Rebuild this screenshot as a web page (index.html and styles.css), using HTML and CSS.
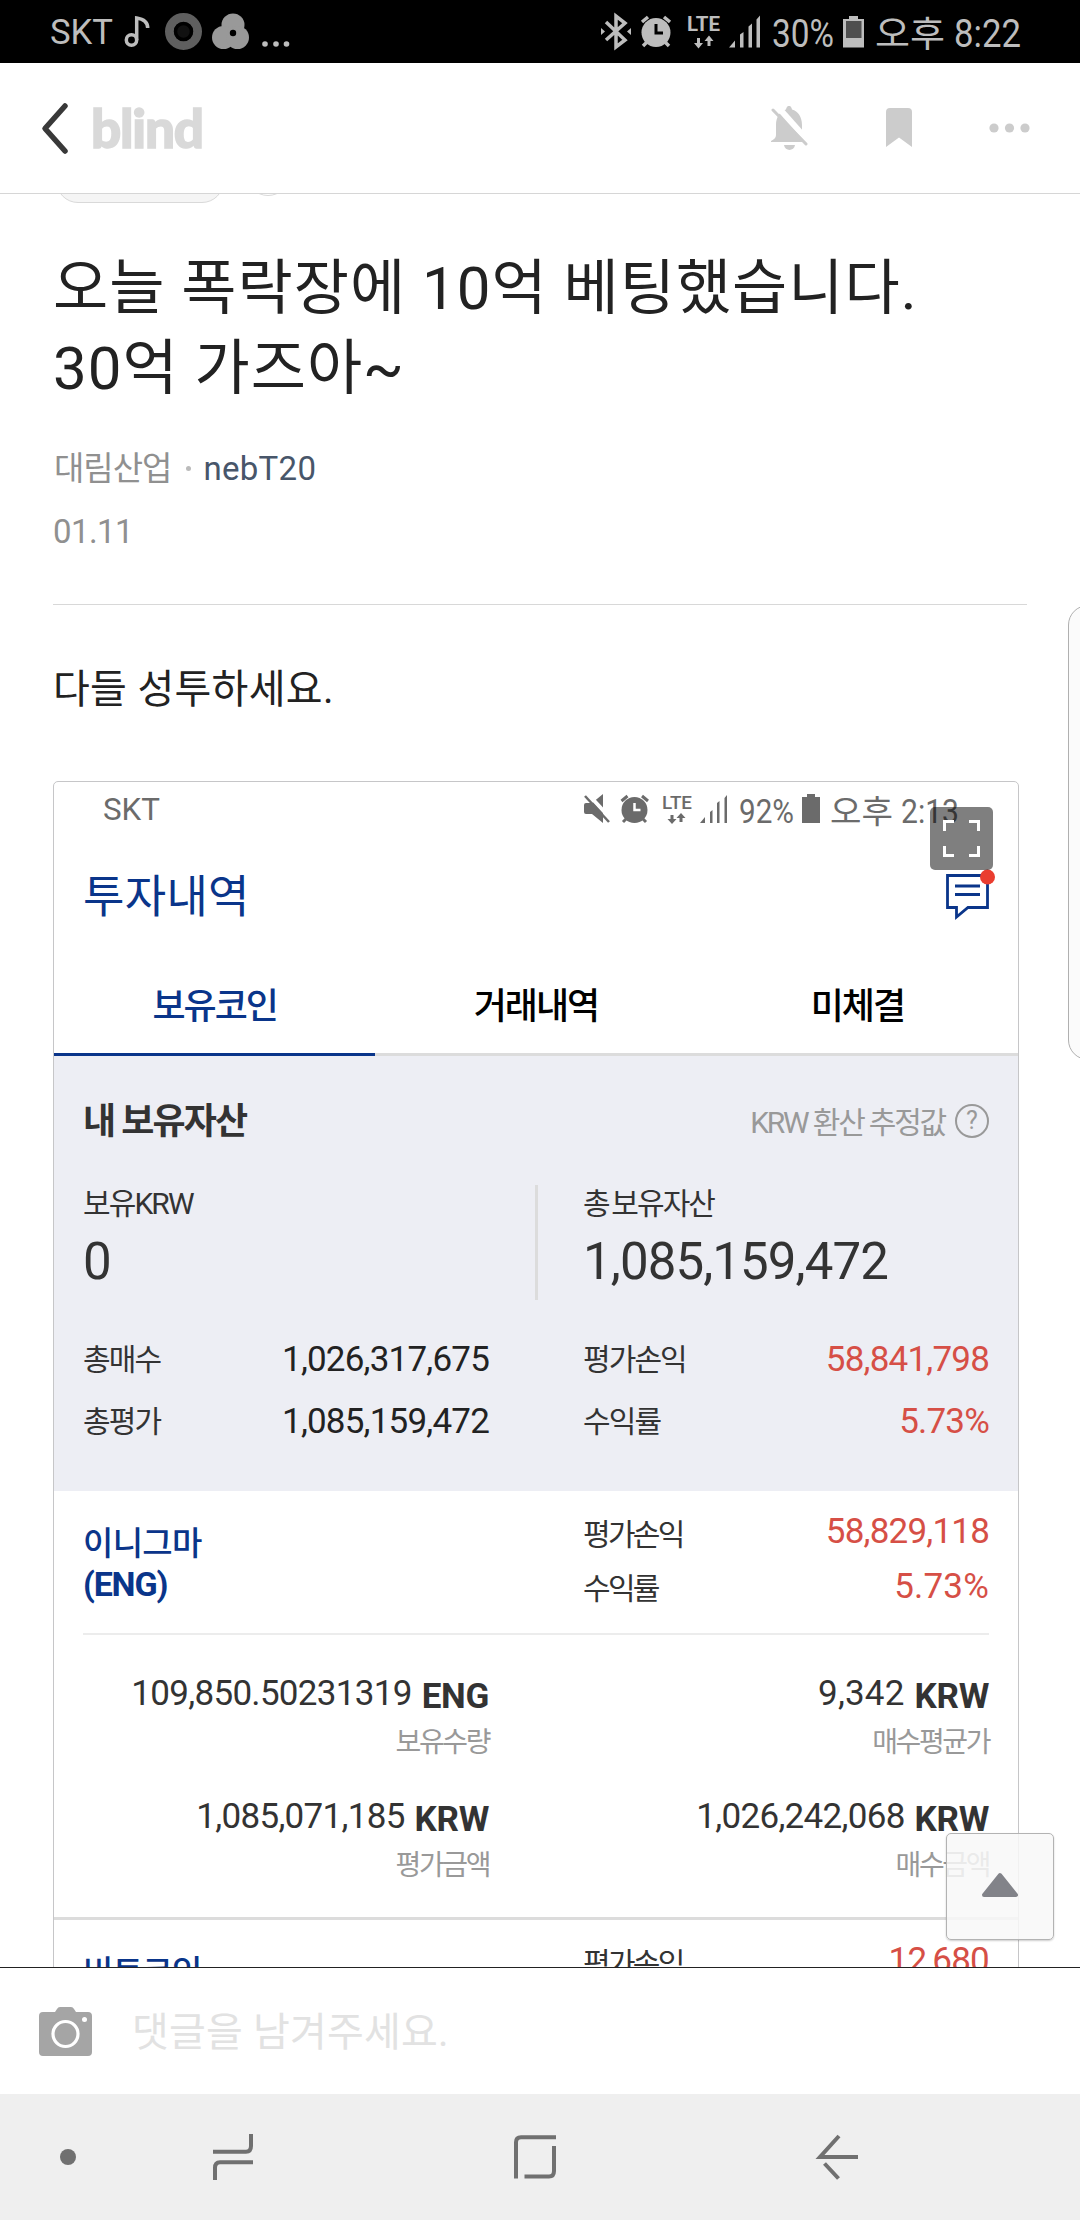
FILE: index.html
```html
<!DOCTYPE html>
<html lang="ko">
<head>
    <meta charset="utf-8">
    <title>오늘 폭락장에 10억 베팅했습니다.</title>
    <link rel="stylesheet" href="styles.css">
</head>
<body>
    <!-- 상태 표시줄 -->
    <div class="statusbar">
        <svg width="1080" height="63" viewBox="0 0 1080 63" fill="#bdbdbd">
            <text x="50" y="44" font-size="35" textLength="63" lengthAdjust="spacingAndGlyphs">SKT</text>
            <g fill="none" stroke="#bdbdbd" stroke-width="3.5">
                <circle cx="131.500" cy="40" r="5.200"/>
                <path d="M136.700 40V18c6 1 11 4 11 10"/>
            </g>
            <circle cx="183.500" cy="31.500" r="14" fill="#111" stroke="#5f5f5f" stroke-width="9"/>
            <circle cx="183.500" cy="31.500" r="8" fill="none" stroke="#000" stroke-width="3.500"/>
            <g fill="#999">
                <circle cx="233" cy="25" r="11.500"/>
                <circle cx="223.500" cy="37.500" r="11.500"/>
                <circle cx="237.500" cy="37.500" r="11.500"/>
            </g>
            <circle cx="233" cy="33" r="3.200" fill="#000"/>
            <circle cx="265" cy="44" r="2.800"/>
            <circle cx="276" cy="44" r="2.800"/>
            <circle cx="286.500" cy="44" r="2.800"/>

            <path d="M606 22l19 18-9 7V16l9 7-19 17" fill="none" stroke="#bdbdbd" stroke-width="3.500"/>
            <path d="M601 28l4 3.500-4 3.500zM631 28l-4 3.500 4 3.500z"/>
            <circle cx="656" cy="32.500" r="14.500"/>
            <path d="M642 22l6-5M670 22l-6-5M643 46l5-5M669 46l-5-5" stroke="#bdbdbd" stroke-width="3.500"/>
            <path d="M656 24v9h7" fill="none" stroke="#000" stroke-width="3"/>
            <text x="687" y="31" font-size="20" font-weight="700" textLength="33" lengthAdjust="spacingAndGlyphs">LTE</text>
            <path d="M697 38h3v5h3l-4.500 5.500-4.500-5.500h3zM707.500 46h3v-5h3l-4.500-5.500-4.500 5.500h3z"/>
            <path d="M729 47.500l6-7v7zM740 47.500v-13l3.500-2.500v15.500zM748.500 47.500v-21l3.500-3v24zM756.500 47.500v-28l3.500-4v32z"/>
            <text x="772" y="47" font-size="39" textLength="62" lengthAdjust="spacingAndGlyphs">30%</text>
            <path d="M843 19h6v-3h9v3h6v28.500h-21z"/>
            <rect x="846" y="21" width="15.500" height="17" fill="#4f4f4f"/>
            <text x="875" y="47" font-size="36" textLength="70" lengthAdjust="spacingAndGlyphs">오후</text>
            <text x="954" y="47" font-size="39" textLength="67" lengthAdjust="spacingAndGlyphs">8:22</text>
        </svg>
    </div>

    <header class="header">
        <svg class="back" width="30" height="56" viewBox="0 0 30 56">
            <path d="M25 6L5 28.500 25 51" fill="none" stroke="#393939" stroke-width="5.500" stroke-linecap="round" stroke-linejoin="round"/>
        </svg>
        <span class="logo">blind</span>
        <svg class="bell" width="38" height="44" viewBox="0 0 38 44">
            <path d="M0 35c3-2 5-3 5-6V19C5 11 9 5 15 3.500c1-5 5-5 6 0C27 5 31 11 31 19v10c0 3 2 4 5 7H0z" fill="#ccc"/>
            <path d="M13 39h11c-1 6.500-10 6.500-11 0z" fill="#ccc"/>
            <path d="M6 0L38 36" stroke="#fff" stroke-width="6"/>
            <path d="M2 4L35 38" stroke="#ccc" stroke-width="3" stroke-linecap="round"/>
        </svg>
        <svg class="bookmark" width="26" height="40" viewBox="0 0 26 40">
            <path d="M0 4q0-4 4-4h18q4 0 4 4v35L13 29.500 0 39z" fill="#ccc"/>
        </svg>
        <svg class="more" width="42" height="10" viewBox="0 0 42 10" fill="#ccc">
            <circle cx="5" cy="5" r="4.600"/>
            <circle cx="20.500" cy="5" r="4.600"/>
            <circle cx="36" cy="5" r="4.600"/>
        </svg>
    </header>

    <main class="content">
        <div class="tags">
            <span class="tag"></span>
            <span class="tag-add"></span>
        </div>
        <h1 class="title">오늘 폭락장에 10억 베팅했습니다.<br>30억 가즈아~</h1>
        <div class="author">
            <span class="company">대림산업</span>
            <span class="dot"></span>
            <span class="nick">nebT20</span>
        </div>
        <div class="date">01.11</div>
        <p class="text">다들 성투하세요.</p>

        <!-- 첨부 이미지 -->
        <div class="shot">
            <svg class="shot-status" width="964" height="56" viewBox="54 782 964 56" fill="#6b6b6b">
                <text x="103" y="820" font-size="31" textLength="57" lengthAdjust="spacingAndGlyphs">SKT</text>
                <path d="M584 805q0-2 2-2h6l11-9v29l-11-9h-6q-2 0-2-2z"/>
                <path d="M587 793l25 27" stroke="#fff" stroke-width="4"/>
                <path d="M585 796l24 26" stroke="#6b6b6b" stroke-width="2.500"/>
                <circle cx="634.500" cy="810" r="13"/>
                <path d="M621.500 801l6-5M648 801l-6-5M623 822l4-4M646 822l-4-4" stroke="#6b6b6b" stroke-width="3"/>
                <path d="M634.500 803v7h6" fill="none" stroke="#fff" stroke-width="2.500"/>
                <text x="662" y="809" font-size="17.500" font-weight="500" textLength="30" lengthAdjust="spacingAndGlyphs">LTE</text>
                <path d="M670.500 815h3v4h3l-4.500 5-4.500-5h3zM679.500 822h3v-4h3l-4.500-5-4.500 5h3z"/>
                <path d="M700 823l5-6v6zM710 823v-11l2.500-2v13zM717 823v-20l2.500-2v22zM724.500 823v-25l2.500-3v28z"/>
                <text x="739" y="823" font-size="34" textLength="55" lengthAdjust="spacingAndGlyphs">92%</text>
                <path d="M802 797h5v-3h8v3h5v26h-18z"/>
                <text x="830" y="823" font-size="32" textLength="63" lengthAdjust="spacingAndGlyphs">오후</text>
                <text x="901" y="823" font-size="34" textLength="58" lengthAdjust="spacingAndGlyphs">2:13</text>
            </svg>
            <div class="shot-head">
                <span class="shot-title">투자내역</span>
                <svg class="chat" width="52" height="48" viewBox="0 0 52 48">
                    <path d="M9.500 7.500h40v32H30L18.500 49V39.500h-9z" fill="#fff" stroke="#0a358a" stroke-width="2.800"/>
                    <path d="M17 18h25M17 26.500h25" stroke="#0a358a" stroke-width="2.800"/>
                    <circle class="chat-dot" cx="49.500" cy="9" r="7.500"/>
                </svg>
            </div>
            <div class="tabs">
                <span class="tab active">보유코인</span>
                <span class="tab">거래내역</span>
                <span class="tab">미체결</span>
            </div>

            <div class="summary">
                <div class="summary-head">
                    <span class="summary-title">내 보유자산</span>
                    <span class="summary-note">KRW 환산 추정값</span>
                    <span class="help">?</span>
                </div>
                <div class="cols totals">
                    <div>
                        <div class="label">보유KRW</div>
                        <div class="big">0</div>
                    </div>
                    <div>
                        <div class="label">총 보유자산</div>
                        <div class="big">1,085,159,472</div>
                    </div>
                </div>
                <div class="cols">
                    <div class="row"><span class="label">총매수</span><span class="num">1,026,317,675</span></div>
                    <div class="row"><span class="label">평가손익</span><span class="num red">58,841,798</span></div>
                    <div class="row"><span class="label">총평가</span><span class="num">1,085,159,472</span></div>
                    <div class="row"><span class="label">수익률</span><span class="num red">5.73%</span></div>
                </div>
            </div>

            <div class="coin">
                <div class="cols coin-head">
                    <div class="coin-name">이니그마<br><b>(ENG)</b></div>
                    <div class="profit">
                        <div class="profit-labels">평가손익<br>수익률</div>
                        <div class="profit-nums">58,829,118<br><span class="wide">5.73%</span></div>
                    </div>
                </div>
                <div class="cols amounts">
                    <div class="amount">
                        <div class="value">109,850.50231319 <b>ENG</b></div>
                        <div class="sub">보유수량</div>
                    </div>
                    <div class="amount">
                        <div class="value"><span class="wide">9,342</span> <b>KRW</b></div>
                        <div class="sub">매수평균가</div>
                    </div>
                    <div class="amount">
                        <div class="value">1,085,071,185 <b>KRW</b></div>
                        <div class="sub">평가금액</div>
                    </div>
                    <div class="amount">
                        <div class="value">1,026,242,068 <b>KRW</b></div>
                        <div class="sub">매수금액</div>
                    </div>
                </div>
            </div>

            <div class="coin">
                <div class="cols coin-head">
                    <div class="coin-name">비트코인</div>
                    <div class="profit">
                        <div class="profit-labels">평가손익</div>
                        <div class="profit-nums">12,680</div>
                    </div>
                </div>
            </div>

            <div class="expand">
                <svg width="37" height="37" viewBox="0 0 37 37" fill="none" stroke="#fff" stroke-width="3">
                    <path d="M1.500 11V1.500H11M26 1.500h9.500V11M35.500 26v9.500H26M11 35.500H1.500V26"/>
                </svg>
            </div>
        </div>

        <div class="edge-panel"></div>
        <div class="to-top">
            <svg width="38" height="26" viewBox="0 0 38 26">
                <path d="M19 3L35 23H3z" fill="#828389" stroke="#828389" stroke-width="4" stroke-linejoin="round"/>
            </svg>
        </div>
    </main>

    <div class="comment">
        <svg width="53" height="49" viewBox="0 0 53 49">
            <path d="M4 5h12l2-3q1-2 3-2h11q2 0 3 2l2 3h12q4 0 4 4v36q0 4-4 4H4q-4 0-4-4V9q0-4 4-4z" fill="#a5a5a5"/>
            <circle cx="26.500" cy="27" r="12.500" fill="none" stroke="#fff" stroke-width="3.200"/>
            <circle cx="45.500" cy="12.500" r="2.500" fill="#fff"/>
        </svg>
        <span class="placeholder">댓글을 남겨주세요.</span>
    </div>

    <nav class="navbar">
        <svg width="1080" height="126" viewBox="0 0 1080 126" fill="none" stroke="#707070" stroke-width="4">
            <circle cx="68" cy="63" r="8" fill="#707070" stroke="none"/>
            <path d="M251 40v12q0 5.700-5 5.700h-33M215 86V74q0-5.700 5-5.700h33"/>
            <path d="M556 43.300h-35q-5 0-5 5V84.500M554 52v25q0 5.500-5 5.500h-24.500"/>
            <path d="M858 63h-38l19-21M824.500 69.500L838.500 84.500"/>
        </svg>
    </nav>
</body>
</html>
```

FILE: styles.css
```css
* {
    box-sizing: border-box;
}
body {
    margin: 0;
    width: 1080px;
    height: 2220px;
    display: flex;
    flex-direction: column;
    overflow: hidden;
    background: #fff;
    color: #222;
    font-family: Roboto, "Noto Sans CJK KR", sans-serif;
    line-height: 1.2;
}
svg {
    display: block;
    flex: none;
}

/* top bars */
.statusbar {
    height: 63px;
    background: #000;
}
.header {
    height: 131px;
    display: flex;
    align-items: center;
    border-bottom: 1px solid #d6d6d6;
    padding: 0 49px 0 40px;
}
.logo {
    margin-left: 21px;
    margin-right: auto;
    font-family: Lato, sans-serif;
    font-size: 53px;
    font-weight: 900;
    letter-spacing: -1.200px;
    -webkit-text-stroke: 1.500px #d9d9d9;
    color: #d9d9d9;
}
.bookmark {
    margin-left: 77px;
}
.more {
    margin-left: 77px;
}

/* post */
.content {
    flex: 1;
    position: relative;
    overflow: hidden;
    padding: 0 53px;
}
.tags {
    display: flex;
    align-items: flex-end;
    height: 9px;
}
.tag {
    width: 168px;
    height: 44px;
    border: 1px solid #d9d9d9;
    border-radius: 22px;
    background: #f5f5f5;
    margin-left: 3px;
}
.tag-add {
    width: 44px;
    height: 44px;
    border: 1px solid #d9d9d9;
    border-radius: 50%;
    margin-left: 22px;
    margin-bottom: 7px;
}
.title {
    margin: 46px 0 0;
    font-size: 60px;
    line-height: 80px;
    font-weight: 400;
    letter-spacing: 1px;
}
.author {
    display: flex;
    align-items: center;
    margin-top: 36px;
    height: 48px;
    font-size: 33px;
}
.company {
    letter-spacing: -1px;
    color: #909090;
    margin-left: 1px;
}
.dot {
    width: 5px;
    height: 5px;
    border-radius: 50%;
    background: #bbb;
    margin: 0 12px 2px 15px;
}
.nick {
    letter-spacing: 0.300px;
    color: #48566a;
}
.date {
    height: 112px;
    padding-top: 15px;
    line-height: 48px;
    font-size: 33px;
    letter-spacing: -0.600px;
    color: #909090;
    border-bottom: 1px solid #d8d8d8;
}
.text {
    margin: 60px 0 66px;
    line-height: 50px;
    font-size: 40px;
    letter-spacing: 0.300px;
}

/* attached screenshot */
.shot {
    position: relative;
    width: 966px;
    border: 1px solid #c6c6c8;
    border-radius: 5px;
}
.shot-head {
    height: 120px;
    padding: 0 28px 0 29px;
    display: flex;
    justify-content: space-between;
    align-items: center;
}
.shot-title {
    font-size: 45px;
    letter-spacing: 0.300px;
    color: #0a358a;
}
.chat {
    margin-bottom: 13px;
    overflow: visible;
}
.chat-dot {
    fill: #ea3d2f;
}
.tabs {
    display: grid;
    grid-template-columns: repeat(3, 1fr);
    height: 98px;
}
.tab {
    border-bottom: 3px solid #dcdcdc;
    padding-top: 3px;
    line-height: 92px;
    text-align: center;
    font-size: 36px;
    font-weight: 500;
    letter-spacing: -2px;
    color: #000;
}
.tab.active {
    color: #0a358a;
    border-color: #0a358a;
}
.cols {
    display: grid;
    grid-template-columns: 406px 406px;
    column-gap: 94px;
}
.summary {
    height: 435px;
    padding: 0 29px;
    background: #edeef4;
    color: #333;
}
.summary-head {
    display: flex;
    align-items: center;
    height: 129px;
    padding-top: 4px;
}
.summary-title {
    margin-right: auto;
    font-size: 36px;
    font-weight: 700;
    letter-spacing: -1.900px;
}
.summary-note {
    font-size: 30px;
    letter-spacing: -2.200px;
    color: #999;
}
.help {
    width: 34px;
    height: 34px;
    margin: 0 0 4px 10px;
    border: 2px solid #999;
    border-radius: 50%;
    line-height: 30px;
    text-align: center;
    font-size: 25px;
    color: #999;
}
.label {
    font-size: 30px;
    letter-spacing: -1.900px;
}
.totals {
    height: 115px;
    margin-bottom: 29px;
    background: linear-gradient(#dcdcdc, #dcdcdc) center / 3px 100% no-repeat;
}
.totals .label {
    line-height: 38px;
    word-spacing: -3px;
}
.big {
    font-size: 51px;
    line-height: 77px;
    letter-spacing: -0.900px;
}
.row {
    display: flex;
    justify-content: space-between;
    align-items: center;
    height: 62px;
}
.num {
    font-size: 35px;
    letter-spacing: -0.800px;
    color: #222;
}
.num.red {
    color: #d64f46;
}

/* coin list */
.coin {
    height: 429px;
    padding: 0 29px;
    border-bottom: 3px solid #dcdcdc;
    color: #333;
}
.coin-head {
    height: 144px;
    border-bottom: 2px solid #ececec;
}
.coin-name {
    padding-top: 32px;
    font-size: 33px;
    line-height: 41px;
    font-weight: 500;
    letter-spacing: -0.700px;
    color: #0a358a;
}
.coin-name b {
    font-size: 34px;
    letter-spacing: -1.200px;
}
.profit {
    display: flex;
    justify-content: space-between;
}
.profit-labels {
    padding-top: 17px;
    font-size: 30px;
    line-height: 54px;
    letter-spacing: -2.700px;
}
.profit-nums {
    padding-top: 13px;
    font-size: 35px;
    line-height: 55px;
    letter-spacing: -0.800px;
    text-align: right;
    color: #d64f46;
}
.wide {
    letter-spacing: 0.200px;
}
.amounts {
    padding-top: 36px;
    row-gap: 25px;
}
.amount {
    text-align: right;
}
.value {
    font-size: 35px;
    line-height: 46px;
    height: 46px;
    letter-spacing: -0.700px;
}
.value b {
    position: relative;
    top: 3px;
    margin-left: 2px;
    letter-spacing: -0.300px;
}
.sub {
    font-size: 28px;
    line-height: 52px;
    letter-spacing: -2.400px;
    color: #999;
}

/* overlays */
.expand {
    position: absolute;
    left: 876px;
    top: 25px;
    width: 63px;
    height: 63px;
    padding: 13px;
    border-radius: 5px;
    background: rgba(0, 0, 0, 0.5);
}
.edge-panel {
    position: absolute;
    left: 1068px;
    top: 411px;
    width: 40px;
    height: 455px;
    border: 1px solid #b0b0b0;
    border-radius: 20px;
    background: #fbfbfb;
}
.to-top {
    position: absolute;
    left: 946px;
    top: 1639px;
    width: 108px;
    height: 107px;
    display: flex;
    justify-content: center;
    align-items: center;
    padding-bottom: 4px;
    border: 1px solid #b3b3b3;
    border-radius: 5px;
    background: rgba(248, 248, 248, 0.85);
    box-shadow: 0 1px 2px rgba(0, 0, 0, 0.2);
}

/* bottom bars */
.comment {
    height: 127px;
    display: flex;
    align-items: center;
    padding: 0 39px;
    border-top: 1px solid #222;
    background: #fff;
}
.placeholder {
    margin-left: 40px;
    padding-top: 4px;
    font-size: 40px;
    letter-spacing: 0.200px;
    color: #e2e2e2;
}
.navbar {
    height: 126px;
    background: #efefef;
}
```
